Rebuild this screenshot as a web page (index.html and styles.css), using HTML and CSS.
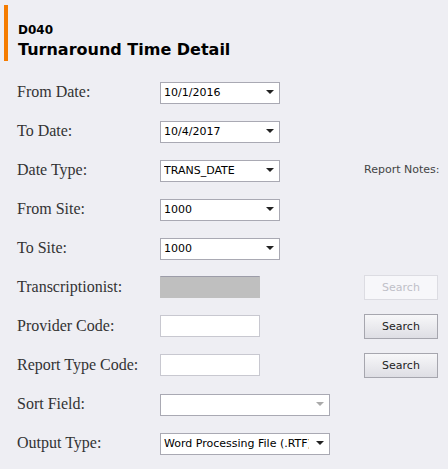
FILE: index.html
```
<!DOCTYPE html>
<html lang="en">
<head>
    <meta charset="UTF-8">
    <title>Turnaround Time Detail</title>
    <link rel="stylesheet" href="styles.css">
</head>
<body>

    <div class="header">
        <div class="code">D040</div>
        <h1>Turnaround Time Detail</h1>
    </div>

    <div class="form">
        <label>From Date:</label>
        <div class="select"><select><option>10/1/2016</option></select></div>
        <div></div>

        <label>To Date:</label>
        <div class="select"><select><option>10/4/2017</option></select></div>
        <div></div>

        <label>Date Type:</label>
        <div class="select"><select><option>TRANS_DATE</option></select></div>
        <div class="notes">Report Notes:</div>

        <label>From Site:</label>
        <div class="select"><select><option>1000</option></select></div>
        <div></div>

        <label>To Site:</label>
        <div class="select"><select><option>1000</option></select></div>
        <div></div>

        <label>Transcriptionist:</label>
        <div><input type="text" class="disabled" disabled></div>
        <div><button disabled>Search</button></div>

        <label>Provider Code:</label>
        <div><input type="text"></div>
        <div><button>Search</button></div>

        <label>Report Type Code:</label>
        <div><input type="text"></div>
        <div><button>Search</button></div>

        <label>Sort Field:</label>
        <div class="select wide empty"><select><option></option></select></div>
        <div></div>

        <label>Output Type:</label>
        <div class="select wide"><select><option>Word Processing File (.RTF)</option></select></div>
        <div></div>
    </div>

</body>
</html>
```

FILE: styles.css
```
body {
    margin: 0;
    background-color: #eeeef3;
    font-family: "DejaVu Sans", Verdana, sans-serif;
    width: 448px;
    height: 469px;
    overflow: hidden;
}

.header {
    margin: 5px 0 0 4px;
    border-left: 4px solid #f57c00;
    padding: 18px 0 1px 10px;
}

.code {
    font-size: 12px;
    font-weight: bold;
    color: #000;
    line-height: 14px;
}

h1 {
    margin: 3px 0 0 0;
    font-size: 16px;
    font-weight: bold;
    color: #000;
    line-height: 20px;
}

.form {
    display: grid;
    grid-template-columns: 143px 204px 74px;
    grid-auto-rows: 39px;
    padding: 20px 0 0 17px;
}

.form label {
    font-family: "Liberation Serif", "Times New Roman", serif;
    font-size: 16px;
    color: #333;
    line-height: 22px;
}

.select {
    position: relative;
    width: 120px;
    height: 22px;
}

.select.wide {
    width: 170px;
}

.select select {
    appearance: none;
    -webkit-appearance: none;
    width: 100%;
    height: 22px;
    margin: 0;
    padding: 0 20px 0 3px;
    border: 1px solid #a9a9b3;
    background-color: #fff;
    font-family: "DejaVu Sans", Verdana, sans-serif;
    font-size: 11px;
    color: #000;
    border-radius: 0;
    box-sizing: border-box;
}

.select::after {
    content: "";
    position: absolute;
    right: 6px;
    top: 9px;
    border-left: 4px solid transparent;
    border-right: 4px solid transparent;
    border-top: 4px solid #222;
}

.select.empty::after {
    border-top-color: #aaa;
}

input {
    width: 100px;
    height: 22px;
    margin: 0;
    border: 1px solid #c8c8d0;
    background-color: #fff;
    box-sizing: border-box;
}

input.disabled {
    background-color: #bfbfbf;
    border-color: #bfbfbf;
    border-top-color: #9c9ca8;
}

button {
    width: 74px;
    height: 25px;
    margin-top: -2px;
    border: 1px solid #a6a6ae;
    background: linear-gradient(#f7f7f9, #dedee4);
    font-family: "DejaVu Sans", Verdana, sans-serif;
    font-size: 11px;
    color: #222;
    padding: 0;
}

button:disabled {
    border-color: #dcdce2;
    background: #f7f7fa;
    color: #c0c0c8;
}

.notes {
    font-size: 11px;
    color: #444;
    line-height: 22px;
    white-space: nowrap;
}
```
